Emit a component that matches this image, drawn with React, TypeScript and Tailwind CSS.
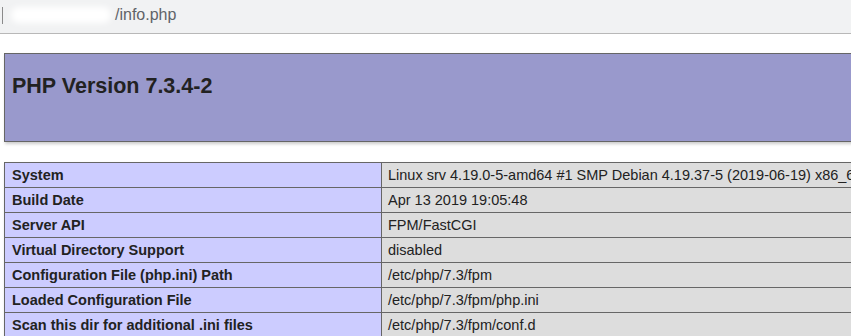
const rows: [string, string][] = [
  ["System", "Linux srv 4.19.0-5-amd64 #1 SMP Debian 4.19.37-5 (2019-06-19) x86_64"],
  ["Build Date", "Apr 13 2019 19:05:48"],
  ["Server API", "FPM/FastCGI"],
  ["Virtual Directory Support", "disabled"],
  ["Configuration File (php.ini) Path", "/etc/php/7.3/fpm"],
  ["Loaded Configuration File", "/etc/php/7.3/fpm/php.ini"],
  ["Scan this dir for additional .ini files", "/etc/php/7.3/fpm/conf.d"],
];

function AddressBar() {
  return (
    <div className="h-[34px] bg-[#f1f2f3] border-b border-[#b8b8b8] flex items-center relative">
      <div className="ml-[2px] w-px h-[17px] bg-[#8a8a8a] mb-[3px]" />
      {/* host part is masked out */}
      <div className="ml-[8px] w-[100px] h-[16px] bg-white rounded-full blur-[3px] mb-[3px]" />
      <span className="ml-[4px] text-[16px] text-[#5f6368] mb-[3px]">/info.php</span>
    </div>
  );
}

export default function App() {
  return (
    <div className="w-[851px] h-[336px] overflow-hidden bg-white font-['Liberation_Sans',Arial,sans-serif] text-[#222]">
      <AddressBar />
      <div className="pl-[4px] pt-[19px] w-[1200px]">
        <div className="h-[89px] w-[1170px] bg-[#99c] border border-[#666] shadow-[1px_2px_3px_#ccc] pl-[7px] pt-[19px]">
          <h1 className="text-[21.5px] font-bold leading-[26px]">PHP Version 7.3.4-2</h1>
        </div>
        <table className="mt-[20px] w-[1170px] border-collapse shadow-[1px_2px_3px_#ccc]">
          <tbody>
            {rows.map(([k, v]) => (
              <tr key={k}>
                <td className="w-[377px] bg-[#ccf] border border-[#666] font-bold text-[14.5px] leading-[24px] pl-[7px] py-0 whitespace-nowrap">
                  {k}
                </td>
                <td className="bg-[#ddd] border border-[#666] text-[14.5px] leading-[24px] pl-[6px] py-0 whitespace-nowrap">
                  {v}
                </td>
              </tr>
            ))}
          </tbody>
        </table>
      </div>
    </div>
  );
}
